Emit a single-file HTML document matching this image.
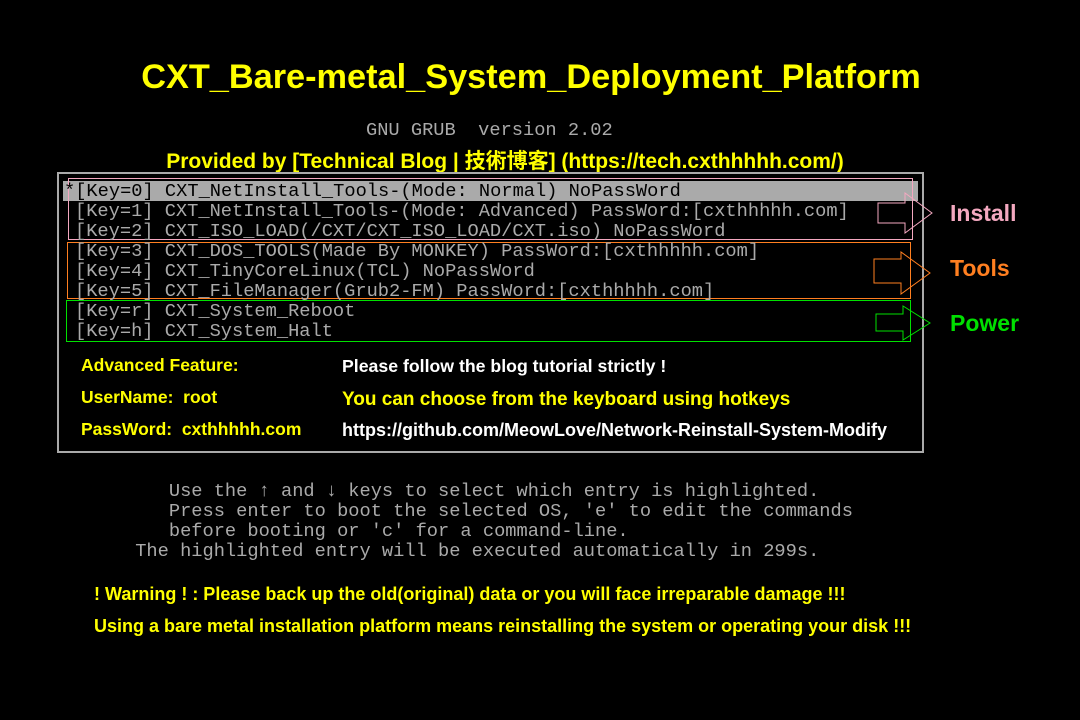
<!DOCTYPE html>
<html><head><meta charset="utf-8"><style>
body{margin:0;width:1080px;height:720px;background:#000;position:relative;overflow:hidden;font-family:"Liberation Sans","Noto Sans CJK SC",sans-serif}
.a{position:absolute;white-space:pre}
.m{font-family:"Liberation Mono",monospace;font-size:18.7px;color:#aaa;line-height:20px}
.b{position:absolute;box-sizing:border-box}
.y{color:#ff0;font-weight:bold}
.w{color:#fff;font-weight:bold}
</style></head><body>
<div class="a y" style="left:0;width:1062px;text-align:center;top:58px;font-size:34.3px">CXT_Bare-metal_System_Deployment_Platform</div>
<div class="a m" style="left:366px;top:120px">GNU GRUB  version 2.02</div>
<div class="a y" style="left:0;width:1010px;text-align:center;top:145px;font-size:21px">Provided by [Technical Blog | 技術博客] (https://tech.cxthhhhh.com/)</div>
<div class="b" style="left:57px;top:172px;width:867px;height:281px;border:2px solid #aaa"></div>
<div class="b" style="left:63px;top:181px;width:855px;height:20px;background:#aaa"></div>
<div class="b" style="left:68px;top:178px;width:845px;height:62px;border:1px solid #f4a8c0"></div>
<div class="b" style="left:67px;top:242px;width:844px;height:57px;border:1px solid #ff7f20"></div>
<div class="b" style="left:66px;top:300px;width:845px;height:42px;border:1px solid #00e000"></div>
<div class="a m" style="left:64px;top:181px;color:#000">*[Key=0] CXT_NetInstall_Tools-(Mode: Normal) NoPassWord</div>
<div class="a m" style="left:75px;top:201px">[Key=1] CXT_NetInstall_Tools-(Mode: Advanced) PassWord:[cxthhhhh.com]
[Key=2] CXT_ISO_LOAD(/CXT/CXT_ISO_LOAD/CXT.iso) NoPassWord
[Key=3] CXT_DOS_TOOLS(Made By MONKEY) PassWord:[cxthhhhh.com]
[Key=4] CXT_TinyCoreLinux(TCL) NoPassWord
[Key=5] CXT_FileManager(Grub2-FM) PassWord:[cxthhhhh.com]
[Key=r] CXT_System_Reboot
[Key=h] CXT_System_Halt</div>
<svg class="a" style="left:0;top:0" width="1080" height="720">
<polygon points="878,203 905,203 905,193 932,213 905,233 905,223 878,223" fill="none" stroke="#f4a8c0" stroke-width="1"/>
<polygon points="874,259 901,259 901,252 930,273 901,294 901,283 874,283" fill="none" stroke="#ff7f20" stroke-width="1"/>
<polygon points="876,314 903,314 903,306 930,323 903,340 903,331 876,331" fill="none" stroke="#00e000" stroke-width="1"/>
</svg>
<div class="a" style="left:950px;top:200px;font-size:23px;font-weight:bold;color:#f4a8c0">Install</div>
<div class="a" style="left:950px;top:255px;font-size:23px;font-weight:bold;color:#ff7f20">Tools</div>
<div class="a" style="left:950px;top:310px;font-size:23px;font-weight:bold;color:#00e000">Power</div>
<div class="a y" style="left:81px;top:355px;font-size:17.5px">Advanced Feature:</div>
<div class="a y" style="left:81px;top:387px;font-size:17.5px">UserName:  root</div>
<div class="a y" style="left:81px;top:419px;font-size:17.5px">PassWord:  cxthhhhh.com</div>
<div class="a w" style="left:342px;top:356px;font-size:17.7px">Please follow the blog tutorial strictly !</div>
<div class="a y" style="left:342px;top:389px;font-size:19px">You can choose from the keyboard using hotkeys</div>
<div class="a w" style="left:342px;top:420px;font-size:18px">https://github.com/MeowLove/Network-Reinstall-System-Modify</div>
<div class="a m" style="left:124px;top:481px">    Use the ↑ and ↓ keys to select which entry is highlighted.
    Press enter to boot the selected OS, 'e' to edit the commands
    before booting or 'c' for a command-line.
 The highlighted entry will be executed automatically in 299s.</div>
<div class="a y" style="left:94px;top:584px;font-size:18px">! Warning ! : Please back up the old(original) data or you will face irreparable damage !!!</div>
<div class="a y" style="left:94px;top:616px;font-size:18px">Using a bare metal installation platform means reinstalling the system or operating your disk !!!</div>
</body></html>
